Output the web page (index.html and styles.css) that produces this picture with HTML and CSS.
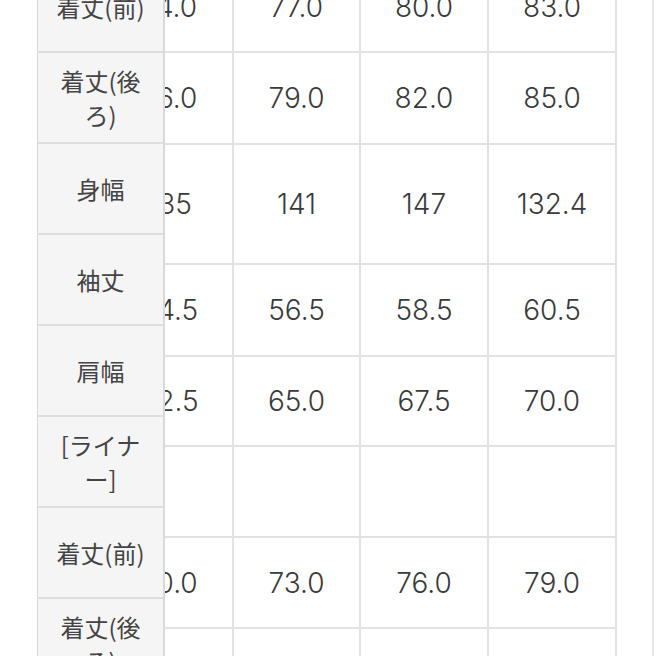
FILE: index.html
```html
<!DOCTYPE html>
<html lang="ja">
<head>
<meta charset="utf-8">
<title>サイズ表</title>
<link rel="stylesheet" href="styles.css">
</head>
<body>
<div class="viewport">
  <div class="scroller">
    <div class="grid">
      <div class="cell">74.0</div><div class="cell">77.0</div><div class="cell">80.0</div><div class="cell">83.0</div>
      <div class="cell">76.0</div><div class="cell">79.0</div><div class="cell">82.0</div><div class="cell">85.0</div>
      <div class="cell">135</div><div class="cell">141</div><div class="cell">147</div><div class="cell">132.4</div>
      <div class="cell">54.5</div><div class="cell">56.5</div><div class="cell">58.5</div><div class="cell">60.5</div>
      <div class="cell">62.5</div><div class="cell">65.0</div><div class="cell">67.5</div><div class="cell">70.0</div>
      <div class="cell"></div><div class="cell"></div><div class="cell"></div><div class="cell"></div>
      <div class="cell">70.0</div><div class="cell">73.0</div><div class="cell">76.0</div><div class="cell">79.0</div>
      <div class="cell">72.0</div><div class="cell">75.0</div><div class="cell">78.0</div><div class="cell">81.0</div>
    </div>
    <div class="sticky">
      <div class="label"><p>着丈(前)</p></div>
      <div class="label"><p>着丈(後ろ)</p></div>
      <div class="label"><p>身幅</p></div>
      <div class="label"><p>袖丈</p></div>
      <div class="label"><p>肩幅</p></div>
      <div class="label"><p>[ライナー]</p></div>
      <div class="label"><p>着丈(前)</p></div>
      <div class="label"><p>着丈(後ろ)</p></div>
    </div>
  </div>
</div>
</body>
</html>
```
FILE: styles.css
```css
html, body {
  margin: 0;
  padding: 0;
  background: #ffffff;
}
.viewport {
  width: 652px;
  height: 656px;
  overflow: hidden;
  border-right: 2px solid #e8e8e8;
}
.scroller {
  position: relative;
  margin-top: -38px;
  padding-left: 107px;
}
.grid {
  display: grid;
  grid-template-columns: 127px 127px 128px 128px;
  grid-template-rows: 91px 92px 120px 92px 90px 91px 91px 91px;
}
.cell {
  box-sizing: border-box;
  border-right: 2px solid #e2e2e2;
  border-bottom: 2px solid #e2e2e2;
  display: flex;
  align-items: center;
  justify-content: center;
  font-family: Inter, "Liberation Sans", sans-serif;
  font-size: 28px;
  font-weight: 300;
  color: #3a3a3a;
}
.sticky {
  position: absolute;
  top: 0;
  left: 37px;
  width: 128px;
  box-sizing: border-box;
  border-left: 1px solid #d6d6d6;
  border-right: 2px solid #d9d9d9;
  background: #f5f5f5;
  display: flex;
  flex-direction: column;
}
.label {
  box-sizing: border-box;
  height: 91px;
  border-bottom: 2px solid #dedede;
  display: flex;
  align-items: center;
  justify-content: center;
}
.label p {
  margin: 0;
  width: 100%;
  box-sizing: border-box;
  padding: 0 15px;
  text-align: center;
  font-family: "Noto Sans CJK JP", "Noto Sans", sans-serif;
  font-size: 24px;
  line-height: 34px;
  color: #444444;
}
```
